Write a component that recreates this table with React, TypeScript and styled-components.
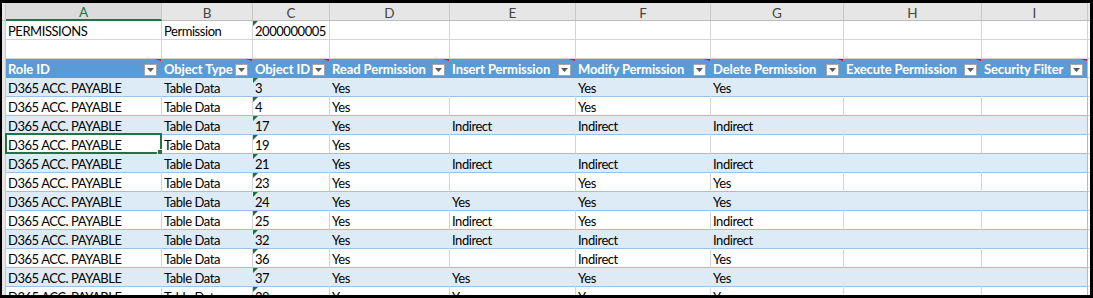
import React from 'react'
import styled, { createGlobalStyle } from 'styled-components'

const GlobalStyle = createGlobalStyle`
  html, body {
    margin: 0;
    padding: 0;
    background: #ffffff;
  }
`

type Band = 'blue' | 'white' | 'head' | 'plain'

interface Row {
  role: string
  type: string
  id: string
  read: string
  insert: string
  modify: string
  del: string
}

const COLS = [156, 91, 77, 120, 126, 135, 133, 138, 106]
const LETTERS = ['A', 'B', 'C', 'D', 'E', 'F', 'G', 'H', 'I']
const HEADERS = [
  'Role ID',
  'Object Type',
  'Object ID',
  'Read Permission',
  'Insert Permission',
  'Modify Permission',
  'Delete Permission',
  'Execute Permission',
  'Security Filter',
]

const ROLE = 'D365 ACC. PAYABLE'
const rows: Row[] = [
  { role: ROLE, type: 'Table Data', id: '3', read: 'Yes', insert: '', modify: 'Yes', del: 'Yes' },
  { role: ROLE, type: 'Table Data', id: '4', read: 'Yes', insert: '', modify: 'Yes', del: '' },
  { role: ROLE, type: 'Table Data', id: '17', read: 'Yes', insert: 'Indirect', modify: 'Indirect', del: 'Indirect' },
  { role: ROLE, type: 'Table Data', id: '19', read: 'Yes', insert: '', modify: '', del: '' },
  { role: ROLE, type: 'Table Data', id: '21', read: 'Yes', insert: 'Indirect', modify: 'Indirect', del: 'Indirect' },
  { role: ROLE, type: 'Table Data', id: '23', read: 'Yes', insert: '', modify: 'Yes', del: 'Yes' },
  { role: ROLE, type: 'Table Data', id: '24', read: 'Yes', insert: 'Yes', modify: 'Yes', del: 'Yes' },
  { role: ROLE, type: 'Table Data', id: '25', read: 'Yes', insert: 'Indirect', modify: 'Yes', del: 'Indirect' },
  { role: ROLE, type: 'Table Data', id: '32', read: 'Yes', insert: 'Indirect', modify: 'Indirect', del: 'Indirect' },
  { role: ROLE, type: 'Table Data', id: '36', read: 'Yes', insert: '', modify: 'Indirect', del: 'Yes' },
  { role: ROLE, type: 'Table Data', id: '37', read: 'Yes', insert: 'Yes', modify: 'Yes', del: 'Yes' },
  { role: ROLE, type: 'Table Data', id: '38', read: 'Yes', insert: 'Yes', modify: 'Yes', del: 'Yes' },
]

export default function App() {
  return (
    <>
      <GlobalStyle />
      <Frame>
        <Gutter>
          <GutterCorner />
        </Gutter>
        <Sheet>
          {LETTERS.map((l, i) => (
            <ColHead key={l} $selected={i === 0}>{l}</ColHead>
          ))}
          <ColHead $selected={false} />

          <Cell $band="plain">PERMISSIONS</Cell>
          <Cell $band="plain">Permission</Cell>
          <Cell $band="plain"><TextFlag />2000000005</Cell>
          {COLS.slice(3).map((_, i) => <Cell key={i} $band="plain" />)}
          <Cell $band="plain" />

          {COLS.map((_, i) => <Cell key={i} $band="plain" />)}
          <Cell $band="plain" />

          {HEADERS.map((h, i) => (
            <Cell key={h} $band="head" $edge={i === 8}>
              <HeadLabel>{h}</HeadLabel>
              <FilterButton>
                <svg width="7" height="4" viewBox="0 0 7 4">
                  <path d="M0 0 L7 0 L3.5 4 Z" fill="#595959" />
                </svg>
              </FilterButton>
              <NoteMark />
            </Cell>
          ))}
          <Cell $band="plain" />

          {rows.map((r, ri) => {
            const band: Band = ri % 2 === 0 ? 'blue' : 'white'
            return (
              <React.Fragment key={ri}>
                <Cell $band={band}>
                  {r.role}
                  {ri === 3 && <Selection><Handle /></Selection>}
                </Cell>
                <Cell $band={band}>{r.type}</Cell>
                <Cell $band={band}><TextFlag />{r.id}</Cell>
                <Cell $band={band}>{r.read}</Cell>
                <Cell $band={band}>{r.insert}</Cell>
                <Cell $band={band}>{r.modify}</Cell>
                <Cell $band={band}>{r.del}</Cell>
                <Cell $band={band} />
                <Cell $band={band} $edge />
                <Cell $band="plain" />
              </React.Fragment>
            )
          })}
        </Sheet>
      </Frame>
    </>
  )
}

const Frame = styled.div`
  box-sizing: border-box;
  width: 1093px;
  height: 298px;
  border-style: solid;
  border-color: #000000;
  border-width: 3px 3px 3px 2px;
  display: flex;
  overflow: hidden;
  background: #ffffff;
  font-family: Lato, "Liberation Sans", sans-serif;
`
const Gutter = styled.div`
  width: 3px;
  flex: none;
  background: #e6e6e6;
  border-right: 1px solid #c8c8c8;
`
const GutterCorner = styled.div`
  height: 17px;
  border-bottom: 1px solid #bdbdbd;
`
const Sheet = styled.div`
  flex: 1;
  display: grid;
  grid-template-columns: ${COLS.map(w => `${w}px`).join(' ')} 1fr;
  grid-template-rows: 18px;
  grid-auto-rows: 19px;
  align-content: start;
`
const ColHead = styled.div<{ $selected: boolean }>`
  box-sizing: border-box;
  display: flex;
  align-items: center;
  justify-content: center;
  font-size: 13.5px;
  color: ${p => (p.$selected ? '#217346' : '#444444')};
  background: ${p => (p.$selected ? '#dcdcdc' : '#e6e6e6')};
  border-right: 1px solid #c8c8c8;
  border-bottom: ${p => (p.$selected ? '2px solid #217346' : '1px solid #bdbdbd')};
  padding-top: 2px;
`
const bandBg: Record<Band, string> = {
  blue: '#ddebf7',
  white: '#ffffff',
  head: '#5b9bd5',
  plain: '#ffffff',
}
const bandRight: Record<Band, string> = {
  blue: '#ddebf7',
  white: '#d4d4d4',
  head: '#5b9bd5',
  plain: '#d4d4d4',
}
const bandBottom: Record<Band, string> = {
  blue: '#9bc2e6',
  white: '#9bc2e6',
  head: '#5b9bd5',
  plain: '#d4d4d4',
}
const Cell = styled.div<{ $band: Band; $edge?: boolean }>`
  position: relative;
  box-sizing: border-box;
  display: flex;
  align-items: flex-end;
  padding: 0 2px 0 2px;
  font-size: 13px;
  letter-spacing: ${p => (p.$band === 'head' ? '-0.1px' : '-0.45px')};
  line-height: 16px;
  white-space: nowrap;
  color: ${p => (p.$band === 'head' ? '#ffffff' : '#000000')};
  font-weight: ${p => (p.$band === 'head' ? 700 : 400)};
  background: ${p => bandBg[p.$band]};
  border-right: 1px solid ${p => (p.$edge ? '#9bc2e6' : bandRight[p.$band])};
  border-bottom: 1px solid ${p => bandBottom[p.$band]};
`
const HeadLabel = styled.span`
  flex: 1;
  overflow: hidden;
`
const FilterButton = styled.span`
  box-sizing: border-box;
  width: 13px;
  height: 12px;
  margin: 0 2px 1px 2px;
  flex: none;
  display: flex;
  align-items: center;
  justify-content: center;
  background: #ffffff;
  border: 1px solid #a6a6a6;
`
const NoteMark = styled.span`
  position: absolute;
  top: 0;
  right: 0;
  width: 0;
  height: 0;
  border-top: 2px solid #ff0000;
  border-left: 6px solid transparent;
`
const TextFlag = styled.span`
  position: absolute;
  top: 0;
  left: 0;
  width: 0;
  height: 0;
  border-top: 5px solid #1e7145;
  border-right: 5px solid transparent;
`
const Selection = styled.span`
  position: absolute;
  top: -2px;
  left: -1px;
  right: -1px;
  bottom: -1px;
  border: 2px solid #217346;
  pointer-events: none;
`
const Handle = styled.span`
  position: absolute;
  right: -4px;
  bottom: -4px;
  width: 5px;
  height: 5px;
  background: #217346;
  border: 1px solid #ffffff;
`
